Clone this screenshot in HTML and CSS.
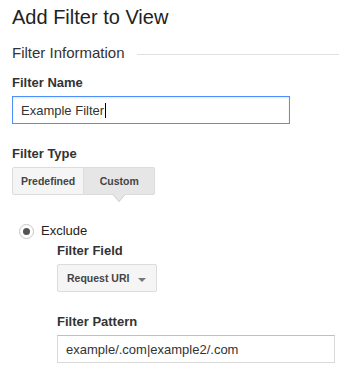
FILE: index.html
```html
<!DOCTYPE html>
<html lang="en">
<head>
    <meta charset="UTF-8">
    <meta name="viewport" content="width=device-width, initial-scale=1.0">
    <title>Add Filter to View</title>
    <link rel="stylesheet" href="styles.css">
</head>
<body>
    <h1 class="page-title">Add Filter to View</h1>

    <!-- Section heading with rule -->
    <div class="section-head">
        <span>Filter Information</span>
        <div class="section-rule"></div>
    </div>

    <label class="field-label label-name">Filter Name</label>
    <div class="text-field focused">Example Filter<span class="caret"></span></div>

    <label class="field-label label-type">Filter Type</label>
    <div class="toggle-group">
        <button class="toggle-btn">Predefined</button>
        <button class="toggle-btn selected">Custom
            <svg class="toggle-arrow" width="14" height="9" viewBox="0 0 14 9">
                <path d="M0 0 L7 8 L14 0 Z" fill="#e6e6e6"/>
                <path d="M0.5 0 L7 7.6 L13.5 0" fill="none" stroke="#d0d0d0" stroke-width="1"/>
            </svg>
        </button>
    </div>

    <div class="radio-row">
        <span class="radio"><span class="radio-dot"></span></span>
        <span>Exclude</span>
    </div>

    <div class="sub-fields">
        <label class="field-label label-field">Filter Field</label>
        <div class="select-btn">
            <span>Request URI</span>
            <span class="select-arrow"></span>
        </div>

        <label class="field-label label-pattern">Filter Pattern</label>
        <div class="text-field pattern">example/.com|example2/.com</div>
    </div>
</body>
</html>
```

FILE: styles.css
```css
/* Basic styling */
body {
    font-family: "Liberation Sans", Arial, sans-serif;
    margin: 0;
    padding: 0 12px;
    background-color: #fff;
    color: #333;
}

.page-title {
    margin: 5px 0 0;
    font-size: 20px;
    font-weight: normal;
    line-height: 24px;
    color: #222;
}

.section-head {
    display: flex;
    align-items: center;
    margin-top: 15px;
    font-size: 15px;
    line-height: 18px;
    color: #333;
}

.section-rule {
    flex: 1;
    height: 1px;
    margin: 3px 0 0 12px;
    background-color: #e0e0e0;
}

.field-label {
    display: block;
    font-size: 13px;
    font-weight: bold;
    line-height: 16px;
    color: #333;
}

.label-name {
    margin-top: 13px;
}

.label-type {
    margin-top: 22px;
}

.text-field {
    box-sizing: border-box;
    width: 278px;
    height: 28px;
    margin-top: 5px;
    padding: 2px 8px 0;
    font-size: 13px;
    line-height: 24px;
    color: #333;
    border: 1px solid #d9d9d9;
    border-top-color: #c0c0c0;
}

.text-field.focused {
    border-color: #4d90fe;
    box-shadow: inset 0 1px 2px rgba(0, 0, 0, 0.1);
}

.caret {
    display: inline-block;
    width: 1px;
    height: 15px;
    margin-left: 1px;
    vertical-align: -3px;
    background-color: #000;
}

.toggle-group {
    display: flex;
    margin-top: 5px;
}

.toggle-btn {
    position: relative;
    box-sizing: border-box;
    min-width: 71px;
    height: 28px;
    padding: 0 8px;
    font-family: inherit;
    font-size: 10.5px;
    font-weight: bold;
    color: #444;
    background-color: #f5f5f5;
    border: 1px solid #dcdcdc;
    border-radius: 2px 0 0 2px;
}

.toggle-btn.selected {
    background-color: #e6e6e6;
    border-left: none;
    border-radius: 0 2px 2px 0;
}

.toggle-arrow {
    position: absolute;
    left: 50%;
    top: 100%;
    margin-left: -7px;
}

.radio-row {
    display: flex;
    align-items: center;
    gap: 7px;
    margin: 27px 0 0 7px;
    font-size: 13px;
    line-height: 16px;
    color: #222;
}

.radio {
    display: flex;
    align-items: center;
    justify-content: center;
    box-sizing: border-box;
    width: 15px;
    height: 15px;
    margin-top: 2px;
    border: 1px solid #c6c6c6;
    border-radius: 50%;
    background-color: #fff;
}

.radio-dot {
    width: 7px;
    height: 7px;
    border-radius: 50%;
    background-color: #555;
}

.sub-fields {
    margin-left: 45px;
}

.label-field {
    margin-top: 4px;
}

.select-btn {
    display: flex;
    align-items: center;
    justify-content: space-between;
    box-sizing: border-box;
    width: 100px;
    height: 28px;
    margin-top: 5px;
    padding: 0 10px 0 9px;
    font-size: 10.5px;
    font-weight: bold;
    color: #444;
    background-color: #f5f5f5;
    border: 1px solid #dcdcdc;
    border-radius: 2px;
}

.select-arrow {
    width: 0;
    height: 0;
    margin-top: 4px;
    border-left: 4px solid transparent;
    border-right: 4px solid transparent;
    border-top: 4px solid #777;
}

.label-pattern {
    margin-top: 22px;
}

.text-field.pattern {
    padding-left: 8px;
}
```
